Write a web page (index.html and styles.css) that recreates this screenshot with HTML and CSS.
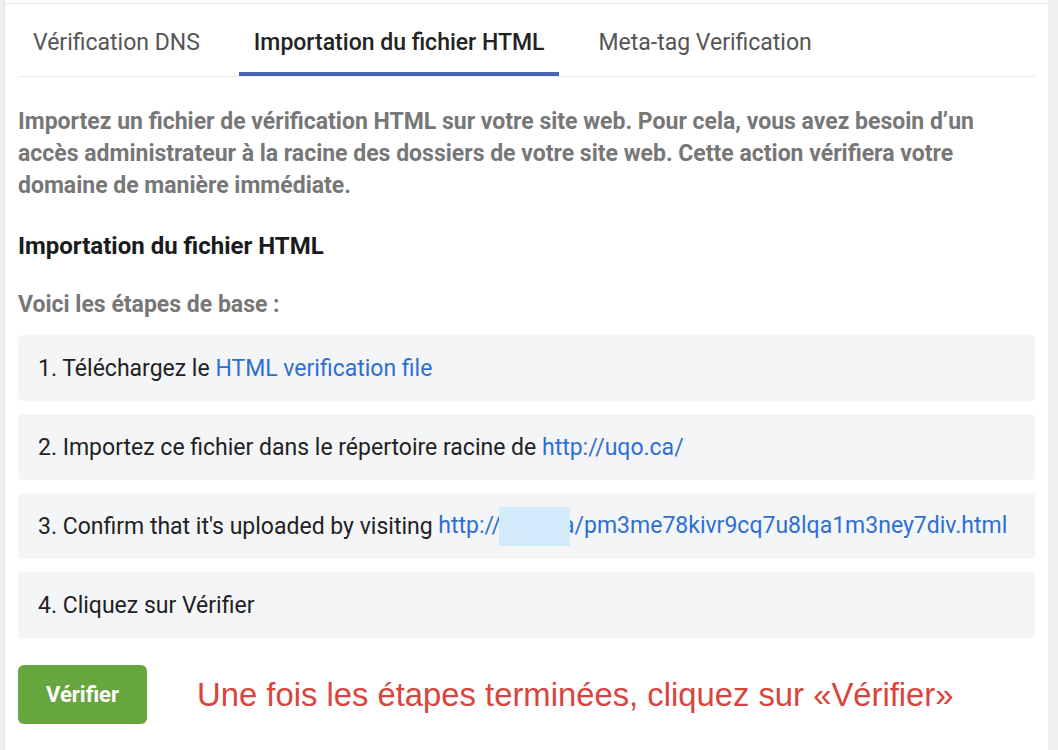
FILE: index.html
```html
<!DOCTYPE html>
<html lang="fr">
<head>
<meta charset="utf-8">
<title>Vérification</title>
<link rel="stylesheet" href="styles.css">
</head>
<body>
<div class="card">
  <div class="topline"></div>
  <div class="inner">
    <div class="tabs">
      <div class="tab">Vérification DNS</div>
      <div class="tab active">Importation du fichier HTML</div>
      <div class="tab">Meta-tag Verification</div>
    </div>
    <p class="intro">Importez un fichier de vérification HTML sur votre site web. Pour cela, vous avez besoin d’un accès administrateur à la racine des dossiers de votre site web. Cette action vérifiera votre domaine de manière immédiate.</p>
    <h3 class="heading">Importation du fichier HTML</h3>
    <p class="sub">Voici les étapes de base :</p>
    <ol class="steps">
      <li class="step">1. Téléchargez le <a class="link" href="#">HTML verification file</a></li>
      <li class="step">2. Importez ce fichier dans le répertoire racine de <a class="link" href="#">http://uqo.ca/</a></li>
      <li class="step">3. Confirm that it's uploaded by visiting <a class="link" href="#">http://<span class="redact"></span>a/pm3me78kivr9cq7u8lqa1m3ney7div.html</a></li>
      <li class="step">4. Cliquez sur Vérifier</li>
    </ol>
    <div class="actions">
      <button class="btn">Vérifier</button>
      <span class="note">Une fois les étapes terminées, cliquez sur «Vérifier»</span>
    </div>
  </div>
</div>
</body>
</html>
```
FILE: styles.css
```css
* { box-sizing: border-box; }
html, body { margin: 0; padding: 0; }
body {
  background: #efefef;
  font-family: Roboto, "Liberation Sans", Arial, sans-serif;
  height: 750px;
  overflow: hidden;
}
.card {
  margin-left: 4px;
  width: 1044px;
  height: 750px;
  background: #fff;
  border-left: 1px solid #e2e2e2;
  padding-top: 3px;
}
.topline { height: 1px; background: #e4e4e4; }
.inner { padding: 0 13px; }
.tabs {
  display: flex;
  gap: 24px;
  border-bottom: 1px solid #ebebeb;
}
.tab {
  height: 72px;
  padding: 8px 15px 0;
  display: flex;
  align-items: center;
  font-size: 23px;
  color: #555;
  border-bottom: 4px solid transparent;
}
.tab.active {
  color: #222;
  font-weight: 500;
  border-bottom-color: #4766b5;
}
.intro {
  margin: 29px 0 0;
  font-size: 23px;
  line-height: 32px;
  font-weight: 700;
  color: #777;
}
.heading {
  margin: 28px 0 0;
  font-size: 24px;
  line-height: 32px;
  font-weight: 700;
  color: #1a1a1c;
}
.sub {
  margin: 27px 0 0;
  font-size: 23px;
  line-height: 32px;
  font-weight: 700;
  color: #777;
}
.steps {
  list-style: none;
  margin: 14px 0 0;
  padding: 0;
  display: flex;
  flex-direction: column;
  gap: 13px;
}
.step {
  height: 66px;
  background: #f4f5f7;
  border-radius: 4px;
  padding: 0 20px;
  display: flex;
  align-items: center;
  white-space: pre;
  font-size: 23px;
  color: #222;
}
.link { color: #2f6fd4; text-decoration: none; white-space: pre; }
.redact {
  position: relative;
  z-index: 1;
  display: inline-block;
  width: 71px;
  height: 39px;
  margin-left: -2px;
  margin-right: -8px;
  background: #d3ecfb;
  vertical-align: middle;
}
.actions {
  margin-top: 27px;
  display: flex;
  align-items: center;
  gap: 50px;
}
.btn {
  width: 129px;
  height: 59px;
  border: none;
  border-radius: 6px;
  background: #67a53e;
  color: #fff;
  font-family: Roboto, sans-serif;
  font-size: 22px;
  font-weight: 700;
}
.note {
  font-family: "Liberation Sans", Arial, sans-serif;
  font-size: 32.8px;
  color: #d9453d;
}
```
